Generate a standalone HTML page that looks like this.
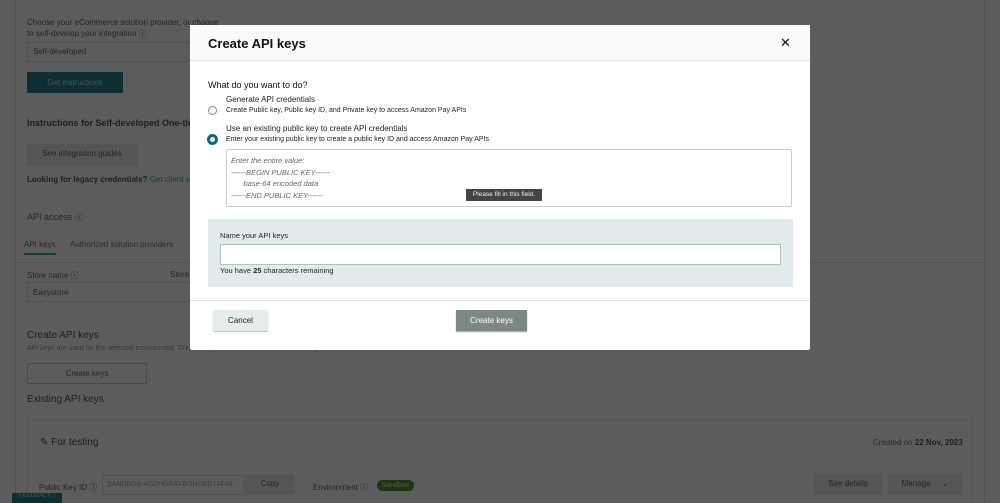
<!DOCTYPE html>
<html><head><meta charset="utf-8"><style>
*{box-sizing:border-box;margin:0;padding:0}
html,body{width:1000px;height:503px;overflow:hidden}
body{position:relative;background:#fff;font-family:"Liberation Sans",sans-serif;color:#555}
.a{position:absolute;white-space:nowrap}
.s{font-size:8px;color:#666}
.btn{position:absolute;border:1px solid #ccc;background:#f1f1f1;font-size:8px;text-align:center;color:#666}
#ov{position:absolute;left:0;top:0;width:1000px;height:503px;background:rgba(0,0,0,0.64)}
#m{position:absolute;left:190px;top:25px;width:620px;height:325px;background:#fff;border-radius:2px;color:#222}
</style></head><body>
<div class="a" style="left:15px;top:0;width:970px;height:503px;border-left:1px solid #ddd;border-right:1px solid #ddd"></div>
<div class="a s" style="left:27px;top:17px;line-height:11px">Choose your eCommerce solution provider, or choose<br>to self-develop your integration ⓘ</div>
<div class="a" style="left:27px;top:42px;width:180px;height:20px;border:1px solid #ddd"></div>
<div class="a s" style="left:33px;top:47px">Self-developed</div>
<div class="a" style="left:27px;top:72px;width:96px;height:21px;background:#2a7f8c;color:#cde;font-size:8px;text-align:center;line-height:21px">Get instructions</div>
<div class="a" style="left:27px;top:118px;font-size:9px;font-weight:bold;color:#555">Instructions for Self-developed One-time</div>
<div class="btn" style="left:27px;top:144px;width:110px;height:22px;line-height:20px;border:none;background:#ececec">See integration guides</div>
<div class="a" style="left:27px;top:175px;font-size:8px;font-weight:bold;color:#555">Looking for legacy credentials? <span style="color:#3a9;font-weight:normal">Get client sec</span></div>
<div class="a" style="left:27px;top:210px;font-size:9px;color:#666">API access ⓘ</div>
<div class="a s" style="left:24px;top:240px">API keys</div>
<div class="a" style="left:24px;top:253px;width:32px;height:2px;background:#3a9"></div>
<div class="a s" style="left:70px;top:240px;color:#777">Authorized solution providers</div>
<div class="a" style="left:15px;top:262px;width:970px;border-top:1px solid #e5e5e5"></div>
<div class="a s" style="left:27px;top:270px">Store name ⓘ</div>
<div class="a s" style="left:170px;top:270px">Store</div>
<div class="a" style="left:27px;top:282px;width:170px;height:20px;border:1px solid #ddd"></div>
<div class="a s" style="left:33px;top:288px">Easystore</div>
<div class="a" style="left:27px;top:330px;font-size:10px;color:#555">Create API keys</div>
<div class="a" style="left:27px;top:345px;font-size:7px;color:#999">API keys are used for the selected environment. Created keys can be used with this store only.</div>
<div class="btn" style="left:27px;top:363px;width:120px;height:21px;line-height:19px;background:#fff">Create keys</div>
<div class="a" style="left:27px;top:394px;font-size:10px;color:#555">Existing API keys</div>
<div class="a" style="left:27px;top:420px;width:946px;height:90px;border:1px solid #e5e5e5"></div>
<div class="a" style="left:40px;top:437px;font-size:10px;color:#555">✎ For testing</div>
<div class="a s" style="left:873px;top:438px;color:#777">Created on <b style="color:#555">22 Nov, 2023</b></div>
<div class="a s" style="left:39px;top:482px">Public Key ID ⓘ</div>
<div class="a" style="left:102px;top:475px;width:142px;height:20px;border:1px solid #ddd;font-size:7px;color:#aaa;padding:5px 4px">SANDBOX-AGZHGRAYBOHOED74F44</div>
<div class="btn" style="left:245px;top:475px;width:50px;height:20px;line-height:18px;border:none;background:#ececec">Copy</div>
<div class="a s" style="left:313px;top:482px">Environment ⓘ</div>
<div class="a" style="left:377px;top:480px;width:37px;height:11px;border-radius:6px;background:#5a8a2a;font-size:7px;color:#dfd;text-align:center;line-height:11px">Sandbox</div>
<div class="btn" style="left:814px;top:474px;width:68px;height:21px;line-height:19px;border:none;background:#ececec">See details</div>
<div class="btn" style="left:888px;top:474px;width:74px;height:21px;line-height:19px;border:none;background:#ececec">Manage &nbsp;&nbsp;&nbsp; ⌄</div>
<div class="a" style="left:12px;top:493px;width:50px;height:10px;background:#2a7f8c;font-size:6px;color:#cde;text-align:center">FEEDBACK ›</div>
<div id="ov"></div>
<div id="m">
 <div class="a" style="left:0;top:0;width:620px;height:36px;background:#fafafa;border-bottom:1px solid #e3e3e3"></div>
 <div class="a" style="left:18px;top:11px;font-size:13px;font-weight:bold;color:#111">Create API keys</div>
 <div class="a" style="left:590px;top:10px;font-size:13px;color:#111">✕</div>
 <div class="a" style="left:18px;top:55px;font-size:9px;color:#111">What do you want to do?</div>
 <div class="a" style="left:36px;top:70px;font-size:8px;color:#222">Generate API credentials</div>
 <div class="a" style="left:36px;top:82px;font-size:7px;color:#222">Create Public key, Public key ID, and Private key to access Amazon Pay APIs</div>
 <div class="a" style="left:18px;top:81px;width:9px;height:9px;border:1px solid #888;border-radius:50%"></div>
 <div class="a" style="left:36px;top:99px;font-size:8px;color:#222">Use an existing public key to create API credentials</div>
 <div class="a" style="left:36px;top:111px;font-size:7px;color:#222">Enter your existing public key to create a public key ID and access Amazon Pay APIs</div>
 <div class="a" style="left:17px;top:109px;width:11px;height:11px;border:3px solid #0c6b7a;border-radius:50%;background:#fff"></div>
 <div class="a" style="left:36px;top:124px;width:566px;height:58px;border:1px solid #ccc;border-radius:2px"></div>
 <div class="a" style="left:41px;top:130px;font-size:7.5px;color:#666;font-style:italic;line-height:11.5px">Enter the entire value:<br>------BEGIN PUBLIC KEY------<br>&nbsp;&nbsp;&nbsp;&nbsp;&nbsp; base-64 encoded data<br>------END PUBLIC KEY------</div>
 <div class="a" style="left:276px;top:164px;width:76px;height:12px;background:#444;color:#eee;font-size:6.5px;text-align:center;line-height:12px">Please fill in this field.</div>
 <div class="a" style="left:18px;top:194px;width:585px;height:68px;background:#e2ebeb"></div>
 <div class="a" style="left:30px;top:206px;font-size:7.5px;color:#222">Name your API keys</div>
 <div class="a" style="left:30px;top:219px;width:561px;height:21px;background:#fff;border:1px solid #bbb"></div>
 <div class="a" style="left:30px;top:241px;font-size:7.5px;color:#222">You have <b>25</b> characters remaining</div>
 <div class="a" style="left:0;top:275px;width:620px;border-top:1px solid #e3e3e3"></div>
 <div class="a" style="left:23px;top:285px;width:55px;height:21px;background:#e6ecec;border-radius:2px;font-size:8px;text-align:center;line-height:21px;box-shadow:0 1px 1px #bbb">Cancel</div>
 <div class="a" style="left:266px;top:285px;width:71px;height:21px;background:#7d8886;color:#fff;font-size:8px;text-align:center;line-height:21px;box-shadow:0 1px 1px #999">Create keys</div>
</div>
</body></html>
